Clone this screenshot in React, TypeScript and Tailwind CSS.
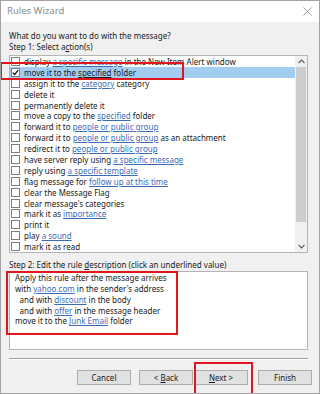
import React from 'react';

type Seg = [string, string?, string?];

// Rule actions in the list (plain, link, plain)
const actions: Seg[] = [
  ['display ', 'a specific message', ' in the New Item Alert window'],
  ['move it to the ', 'specified', ' folder'],
  ['assign it to the ', 'category', ' category'],
  ['delete it'],
  ['permanently delete it'],
  ['move a copy to the ', 'specified', ' folder'],
  ['forward it to ', 'people or public group'],
  ['forward it to ', 'people or public group', ' as an attachment'],
  ['redirect it to ', 'people or public group'],
  ['have server reply using ', 'a specific message'],
  ['reply using ', 'a specific template'],
  ['flag message for ', 'follow up at this time'],
  ['clear the Message Flag'],
  ["clear message's categories"],
  ['mark it as ', 'importance'],
  ['print it'],
  ['play ', 'a sound'],
  ['mark it as read'],
];

const description: { seg: Seg; indent?: boolean }[] = [
  { seg: ['Apply this rule after the message arrives'] },
  { seg: ['with ', 'yahoo.com', " in the sender's address"] },
  { seg: ['and with ', 'discount', ' in the body'], indent: true },
  { seg: ['and with ', 'offer', ' in the message header'], indent: true },
  { seg: ['move it to the ', 'Junk Email', ' folder'] },
];

function Segments({ seg, selected }: { seg: Seg; selected?: boolean }) {
  return (
    <>
      {seg[0]}
      {seg[1] && (
        <span className={`underline underline-offset-[1px] ${selected ? 'text-[#1a1a1a]' : 'text-[#3a6db5]'}`}>
          {seg[1]}
        </span>
      )}
      {seg[2]}
    </>
  );
}

function Chevron({ up }: { up?: boolean }) {
  return (
    <svg width="7" height="5" viewBox="0 0 7 5" className={up ? '' : 'rotate-180'}>
      <path d="M0.5 4.2 L3.5 1.2 L6.5 4.2" fill="none" stroke="#5a5a5a" strokeWidth="1.2" />
    </svg>
  );
}

function Button({ label, u, className = '' }: { label: [string, string, string]; u?: boolean; className?: string }) {
  return (
    <button
      type="button"
      className={`h-[15px] w-[54px] border border-[#adadad] bg-[#e1e1e1] text-center text-[8px] leading-[13px] text-[#1a1a1a] ${className}`}
    >
      {label[0]}
      <span className={u ? 'underline underline-offset-[1px]' : ''}>{label[1]}</span>
      {label[2]}
    </button>
  );
}

export default function App() {
  return (
    <div
      className="relative flex h-[394px] w-[320px] flex-col overflow-hidden border border-[#a3a3a3] bg-[#f0f0f0] text-[8px] text-[#1a1a1a]"
      style={{ fontFamily: '"Noto Sans", "Open Sans", sans-serif' }}
    >
      {/* Title bar */}
      <div className="flex h-[21px] shrink-0 items-center justify-between bg-white pl-[6px] pr-[7px]">
        <span className="text-[9.5px] text-[#8c8c8c]">Rules Wizard</span>
        <svg width="9" height="9" viewBox="0 0 9 9">
          <path d="M0.5 0.5 L8.5 8.5 M8.5 0.5 L0.5 8.5" stroke="#9a9a9a" strokeWidth="1" />
        </svg>
      </div>

      {/* Body */}
      <div className="flex flex-1 flex-col pl-[8px] pr-[11px] pt-[8px] leading-[11px]">
        <div>What do you want to do with the message?</div>
        <div>
          Step 1: Select a<span className="underline underline-offset-[1px]">c</span>tion(s)
        </div>

        {/* Actions list */}
        <div className="mt-[3px] flex h-[198px] border border-[#b4b4b4] bg-white">
          <div className="flex flex-1 flex-col">
            {actions.map((seg, i) => {
              const selected = i === 1;
              return (
                <div
                  key={i}
                  className={`flex h-[10.9px] items-center whitespace-nowrap ${selected ? 'bg-[#a2cdf1]' : ''}`}
                >
                  <span className="ml-[1px] mr-[4px] flex h-[9px] w-[9px] shrink-0 items-center justify-center border border-[#7d7d7d] bg-white">
                    {selected && (
                      <svg width="7" height="7" viewBox="0 0 7 7">
                        <path d="M0.8 3.6 L2.7 5.5 L6.2 1.2" fill="none" stroke="#111" strokeWidth="1.3" />
                      </svg>
                    )}
                  </span>
                  <span>
                    <Segments seg={seg} selected={selected} />
                  </span>
                </div>
              );
            })}
          </div>
          {/* Scrollbar */}
          <div className="flex w-[12px] flex-col bg-[#f0f0f0]">
            <div className="flex h-[11px] items-center justify-center">
              <Chevron up />
            </div>
            <div className="mx-[1px] h-[155px] bg-[#cdcdcd]" />
            <div className="flex-1" />
            <div className="flex h-[12px] items-center justify-center">
              <Chevron />
            </div>
          </div>
        </div>

        <div className="mt-[6px]">
          Step 2: Edit the rule <span className="underline underline-offset-[1px]">d</span>escription (click an underlined value)
        </div>

        {/* Rule description */}
        <div className="mt-[1px] flex h-[79px] flex-col border border-[#b4b4b4] bg-white pl-[5px] pt-[1px] leading-[10.85px]">
          {description.map((line, i) => (
            <div key={i} className={`whitespace-nowrap ${line.indent ? 'pl-[4.5px]' : ''}`}>
              <Segments seg={line.seg} />
            </div>
          ))}
        </div>

        <div className="mt-[8px] h-[1px] bg-[#a0a0a0]" />
        <div className="h-[1px] bg-white" />

        {/* Buttons */}
        <div className="mt-[10px] flex justify-end">
          <Button label={['Cancel', '', '']} />
          <Button label={['<\u00a0', 'B', 'ack']} u className="ml-[8px]" />
          <Button label={['', 'N', 'ext\u00a0>']} u className="ml-[1px] w-[52px]" />
          <Button label={['Finish', '', '']} className="-mr-[4px] ml-[10px] w-[53px]" />
        </div>
      </div>

      {/* Annotation boxes */}
      <div className="absolute left-[-1px] top-[61px] h-[18px] w-[184px] border-2 border-[#e0161d]" />
      <div className="absolute left-[5px] top-[270px] h-[64px] w-[172px] border-2 border-[#e0161d]" />
      <div className="absolute left-[193px] top-[361px] h-[40px] w-[59px] border-2 border-[#e0161d]" />
    </div>
  );
}
